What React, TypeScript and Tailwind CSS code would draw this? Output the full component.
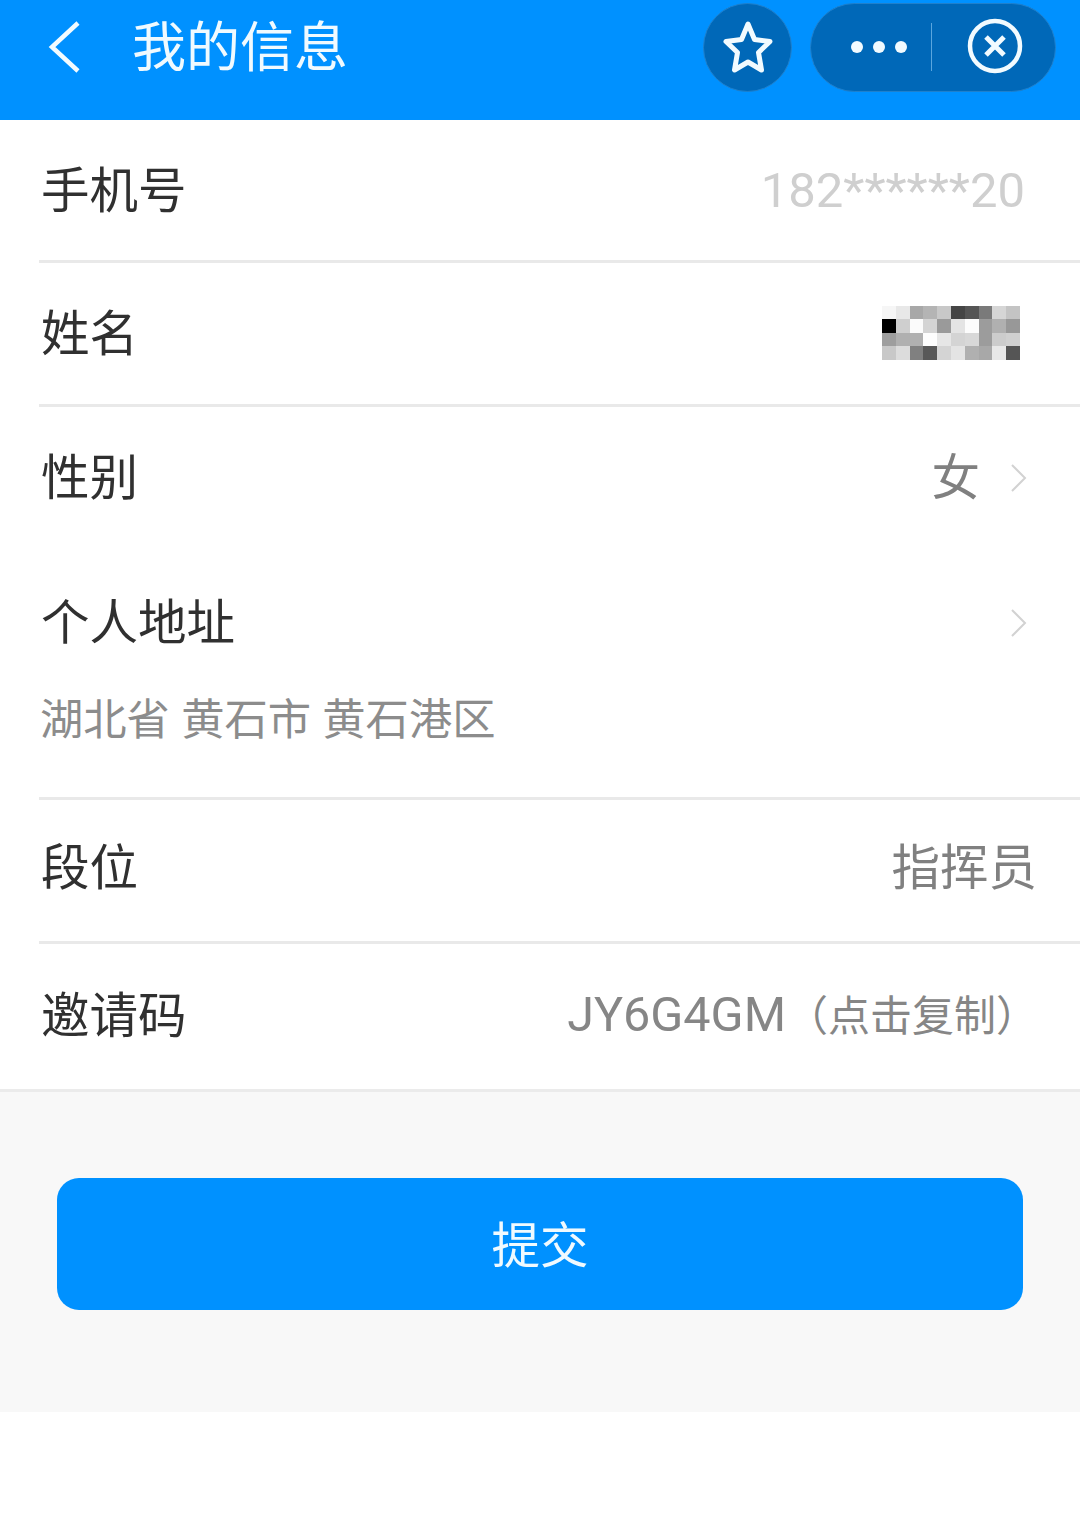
import React from "react";

const cjk = "font-['Noto_Sans','Noto_Sans_CJK_SC',sans-serif]";
const latin = "font-['Roboto','Noto_Sans_CJK_SC',sans-serif]";

// pixelated name block, 10 x 4 cells
const mosaic = [
  "#f6f6f6", "#e8e8e8", "#a8a8a8", "#b4b4b4", "#c8c8c8", "#454545", "#555555", "#7a7a7a", "#d6d6d6", "#c4c4c4",
  "#000000", "#cfcfcf", "#fbfbfb", "#d4d4d4", "#9a9a9a", "#e4e4e4", "#fcfcfc", "#9c9c9c", "#b0b0b0", "#989898",
  "#9e9e9e", "#b0b0b0", "#b0b0b0", "#fdfdfd", "#e6e6e6", "#d4d4d4", "#d8d8d8", "#9c9c9c", "#cccccc", "#d0d0d0",
  "#c8c8c8", "#dcdcdc", "#808080", "#585858", "#d4d4d4", "#e4e4e4", "#b0b0b0", "#a8a8a8", "#e8e8e8", "#555555",
];

function Chevron() {
  return (
    <svg width="18" height="30" viewBox="0 0 18 30" fill="none" className="shrink-0 mt-[3px]">
      <path d="M2 2 L15 15 L2 28" stroke="#d2d2d2" strokeWidth="2" />
    </svg>
  );
}

function Row({ label, className, children }: { label: string; className: string; children?: React.ReactNode }) {
  return (
    <div className={`ml-[39px] pl-[2px] flex items-center justify-between ${className}`}>
      <span className="text-[48.5px] leading-none text-[#303030]">{label}</span>
      {children}
    </div>
  );
}

export default function App() {
  return (
    <div className={`w-[1080px] h-[1527px] bg-white ${cjk}`}>
      <header className="h-[120px] bg-[#0091ff] flex items-start pt-[3px] pl-[46px] pr-[24px]">
        <svg width="38" height="54" viewBox="0 0 38 54" fill="none" className="mt-[17px] shrink-0">
          <path d="M32 3 L6 27 L32 51" stroke="#f2fbff" strokeWidth="4.5" />
        </svg>
        <h1 className="ml-[48px] mt-[13px] text-[54px] leading-[60px] text-[#f0faff]">我的信息</h1>
        <div className="ml-auto flex gap-[18px]">
          <div className="w-[89px] h-[89px] rounded-full bg-[#0068b8] border border-[#1f80cc] flex items-center justify-center">
            <svg width="52" height="52" viewBox="0 0 52 52" fill="none" className="mb-[2px]">
              <path d="M26 3 L32.5 18.5 L48 20.5 L36.5 31.5 L39.5 49 L26 41 L12.5 49 L15.5 31.5 L4 20.5 L19.5 18.5 Z" stroke="#f2fbff" strokeWidth="5" strokeLinejoin="round" />
            </svg>
          </div>
          <div className="w-[246px] h-[89px] rounded-full bg-[#0068b8] border border-[#1f80cc] flex items-center">
            <div className="w-[96px] mb-[2px] flex justify-end gap-[10px]">
              <span className="w-[12px] h-[12px] rounded-full bg-[#f2fbff]" />
              <span className="w-[12px] h-[12px] rounded-full bg-[#f2fbff]" />
              <span className="w-[12px] h-[12px] rounded-full bg-[#f2fbff]" />
            </div>
            <div className="ml-[24px] mb-[1px] w-px h-[48px] bg-[#5aa6de]" />
            <svg width="56" height="56" viewBox="0 0 56 56" fill="none" className="ml-[35px] mb-[3px]">
              <circle cx="28" cy="28" r="25" stroke="#f2fbff" strokeWidth="4.5" />
              <path d="M19 19 L37 37 M37 19 L19 37" stroke="#f2fbff" strokeWidth="5" />
            </svg>
          </div>
        </div>
      </header>

      <Row label="手机号" className="h-[143px] pb-[2px] border-b-[3px] border-[#e9e9e9]">
        <span className={`mr-[55px] mt-[2px] text-[49px] leading-none text-[#cfcfcf] ${latin}`}>182******20</span>
      </Row>
      <Row label="姓名" className="h-[144px] pb-[2px] border-b-[3px] border-[#e9e9e9]">
        <div className="mr-[60px] w-[138px] h-[54px] grid grid-cols-10 grid-rows-4">
          {mosaic.map((c, i) => (
            <div key={i} style={{ backgroundColor: c }} />
          ))}
        </div>
      </Row>
      <Row label="性别" className="h-[140px] pb-[1px]">
        <div className="mr-[52px] flex items-center gap-[30px]">
          <span className="text-[48.5px] leading-none text-[#808080]">女</span>
          <Chevron />
        </div>
      </Row>
      <Row label="个人地址" className="h-[150px] pb-[2px]">
        <div className="mr-[52px]">
          <Chevron />
        </div>
      </Row>
      <div className="ml-[39px] pl-[1px] h-[103px] border-b-[3px] border-[#e9e9e9] text-[43.3px] leading-[44px] text-[#8c8c8c]">
        湖北省 黄石市 黄石港区
      </div>
      <Row label="段位" className="h-[144px] pb-[8px] border-b-[3px] border-[#e9e9e9]">
        <span className="mr-[43px] text-[48.5px] leading-none text-[#808080]">指挥员</span>
      </Row>
      <div className="pl-[41px] pr-[42px] pb-[4px] h-[145px] flex items-center justify-between">
        <span className="text-[48.5px] leading-none text-[#303030]">邀请码</span>
        <span className={`mt-[2px] text-[48.5px] leading-none text-[#868686] ${latin}`}>
          JY6G4GM<span className={`text-[42px] ${cjk}`}>（点击复制）</span>
        </span>
      </div>

      <div className="h-[323px] bg-[#f8f8f8] border-t-[3px] border-[#ebebeb] pt-[86px] px-[57px]">
        <button className="w-[966px] h-[132px] rounded-[22px] bg-[#0091ff] text-[48.5px] leading-none text-[#f0faff]">提交</button>
      </div>
    </div>
  );
}
